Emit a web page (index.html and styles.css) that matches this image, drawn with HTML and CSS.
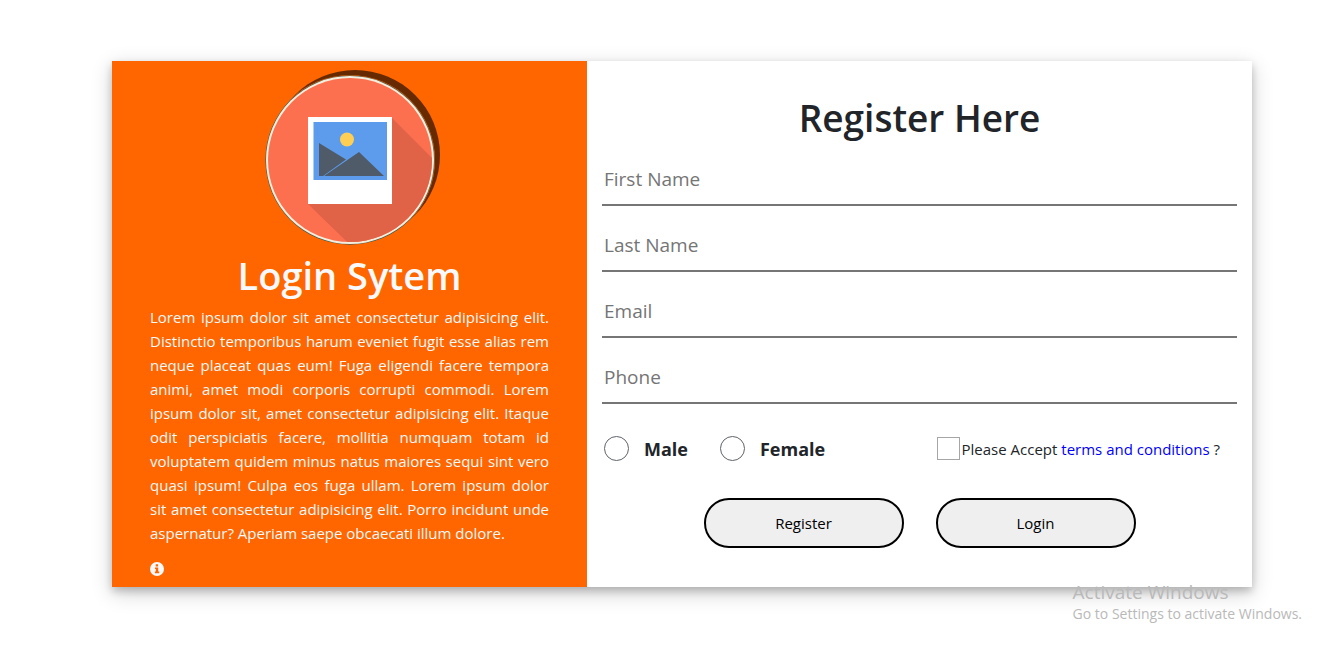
FILE: index.html
```html
<!DOCTYPE html>
<html lang="en">
<head>
<meta charset="utf-8">
<meta name="viewport" content="width=device-width, initial-scale=1">
<title>Register</title>
<link rel="stylesheet" href="styles.css">
</head>
<body>
<main class="card">
  <section class="intro">
    <svg class="logo" viewBox="0 0 170 170" aria-hidden="true">
      <defs><clipPath id="disc"><circle cx="85" cy="85" r="82"/></clipPath></defs>
      <circle cx="85" cy="85" r="84.700" fill="#4f5b4c"/>
      <circle cx="85" cy="85" r="84" fill="#f5eedc"/>
      <circle cx="85" cy="85" r="82" fill="#fc7050"/>
      <path d="M126 42L190 106V190H106L43 129Z" fill="#e06247" clip-path="url(#disc)"/>
      <path d="M43 42h84v87H43z" fill="#fff"/>
      <path d="M48.500 47h73.500v58H48.500z" fill="#5d9cec"/>
      <circle cx="82" cy="64.500" r="7" fill="#ffce54"/>
      <path d="M54 68L81 84.500 58 101H54zM94 77L119 101H59z" fill="#4f5b69"/>
    </svg>
    <h1 class="title">Login Sytem</h1>
    <p class="text">Lorem ipsum dolor sit amet consectetur adipisicing elit. Distinctio temporibus harum eveniet fugit esse alias rem neque placeat quas eum! Fuga eligendi facere tempora animi, amet modi corporis corrupti commodi. Lorem ipsum dolor sit, amet consectetur adipisicing elit. Itaque odit perspiciatis facere, mollitia numquam totam id voluptatem quidem minus natus maiores sequi sint vero quasi ipsum! Culpa eos fuga ullam. Lorem ipsum dolor sit amet consectetur adipisicing elit. Porro incidunt unde aspernatur? Aperiam saepe obcaecati illum dolore.</p>
    <svg class="info" viewBox="0 0 14 14" role="img" aria-label="Information">
      <circle cx="7" cy="7" r="7" fill="#f8f9fa"/>
      <path d="M5.700 2.200h2.400v2.200H5.700zM5 5.400h3.200v4.200h1v1.600H4.900V9.600h.9V7H5z" fill="#f60"/>
    </svg>
  </section>
  <form class="form">
    <h2 class="title">Register Here</h2>
    <div class="fields">
      <input class="field" type="text" placeholder="First Name" aria-label="First Name">
      <input class="field" type="text" placeholder="Last Name" aria-label="Last Name">
      <input class="field" type="email" placeholder="Email" aria-label="Email">
      <input class="field" type="tel" placeholder="Phone" aria-label="Phone">
    </div>
    <div class="options">
      <div class="genders">
        <label class="gender"><input class="radio" type="radio" name="gender">Male</label>
        <label class="gender"><input class="radio" type="radio" name="gender">Female</label>
      </div>
      <div class="terms">
        <input class="check" type="checkbox" id="accept">
        <span><label for="accept">Please Accept</label> <a class="link" href="#">terms and conditions</a> ?</span>
      </div>
    </div>
    <div class="actions">
      <button class="button" type="submit">Register</button>
      <button class="button" type="button">Login</button>
    </div>
  </form>
</main>
<aside class="notice">
  <p class="notice-title">Activate Windows</p>
  <p class="notice-text">Go to Settings to activate Windows.</p>
</aside>
</body>
</html>
```
FILE: styles.css
```css
* {
  box-sizing: border-box;
}

body {
  margin: 0;
  padding: 61px 16px 61px 38px;
  background: #fff;
  color: #212529;
  font-family: "Open Sans", "Noto Sans", sans-serif;
  font-size: 15px;
  line-height: 24px;
}

.card {
  display: grid;
  grid-template-columns: 5fr 7fr;
  max-width: 1140px;
  margin: 0 auto;
  background: #fff;
  box-shadow: 0 4px 8px rgba(0, 0, 0, .2), 0 6px 20px rgba(0, 0, 0, .19);
}

.intro {
  display: flex;
  flex-direction: column;
  padding: 14px 38px 11px;
  background: #f60;
  color: #f8f9fa;
}

.logo {
  align-self: center;
  width: 170px;
  height: 170px;
  border-radius: 50%;
  box-shadow: 5px -5px 0 rgba(0, 0, 0, .6);
}

.title {
  margin: 0;
  font-size: 38px;
  font-weight: 600;
  line-height: 48px;
  text-align: center;
}

.intro .title {
  margin: 6px 0;
}

.form .title {
  font-size: 37px;
}

.text {
  margin: 0 0 17px;
  text-align: justify;
}

.info {
  width: 14px;
  height: 14px;
}

.form {
  padding: 33px 15px 39px;
}

.fields {
  display: flex;
  flex-direction: column;
  gap: 14px;
  margin-top: 12px;
}

.field {
  width: 100%;
  height: 52px;
  padding: 0 2px;
  border: 0;
  border-bottom: 2px solid #767676;
  background: none;
  font: inherit;
  font-size: 19px;
}

.field::placeholder {
  color: #757575;
}

.options {
  display: flex;
  justify-content: space-between;
  align-items: center;
  margin-top: 32px;
  padding: 0 17px 0 2px;
}

.genders {
  display: flex;
  gap: 32px;
}

.gender {
  display: flex;
  align-items: center;
  gap: 15px;
  font-size: 18px;
  font-weight: 700;
}

.radio,
.check {
  appearance: none;
  flex: none;
  margin: 0;
  background: #fff;
}

.radio {
  width: 25px;
  height: 25px;
  border: 1px solid #5f6368;
  border-radius: 50%;
}

.radio:checked {
  box-shadow: inset 0 0 0 5px #fff;
  background: #0075ff;
}

.terms {
  display: flex;
  align-items: center;
  gap: 2px;
}

.check {
  width: 23px;
  height: 23px;
  border: 1px solid #a6a6a6;
}

.check:checked {
  background: #0075ff;
}

.link {
  color: #00f;
  text-decoration: none;
}

.actions {
  display: flex;
  justify-content: center;
  gap: 32px;
  margin-top: 37px;
}

.button {
  width: 200px;
  height: 50px;
  border: 2px solid #000;
  border-radius: 25px;
  background: #efefef;
  color: #000;
  font: inherit;
}

.notice {
  position: absolute;
  right: 40px;
  bottom: 32px;
  color: #b9b9b9;
}

.notice p {
  margin: 0;
}

.notice-title {
  font-size: 19px;
}

.notice-text {
  font-size: 14px;
  line-height: 20px;
}
```
